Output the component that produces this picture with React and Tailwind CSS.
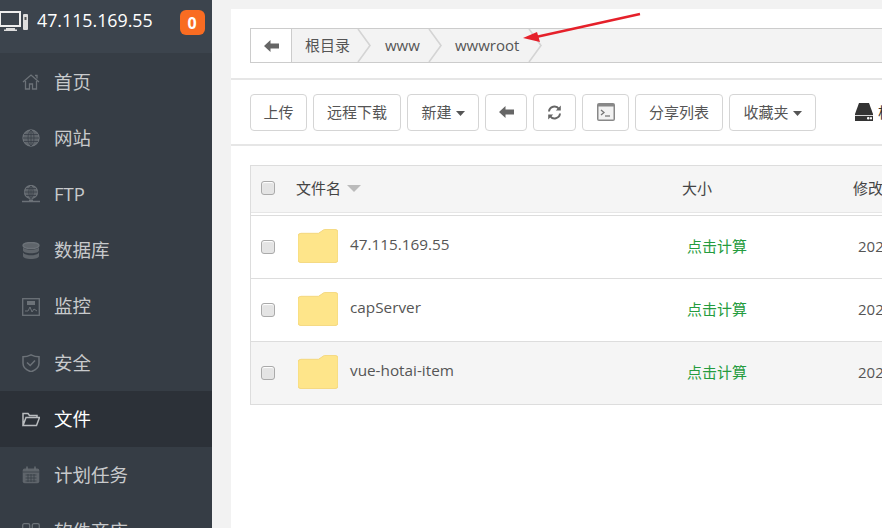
import React from "react";

const Ic = ({ children, className = "" }) => (
  <svg viewBox="0 0 18 18" className={"w-[18px] h-[18px] shrink-0 " + className} fill="none" stroke="#6c7278" strokeWidth="1.3">
    {children}
  </svg>
);

const items = [
  ["首页", <Ic><path d="M1 9l8-7 8 7M3.500 8v8h4v-5h3v5h4V8" /><path d="M13 2.500h2v3" /></Ic>],
  ["网站", <Ic><circle cx="9" cy="9" r="8" fill="#5f656b" stroke="#6c7278" /><path d="M1 9h16M2 5.500h14M2 12.500h14M9 1v16M9 1C5 4 5 14 9 17M9 1c4 3 4 13 0 16" stroke="#383f47" strokeWidth="0.8" /></Ic>],
  ["FTP", <Ic><circle cx="9" cy="7" r="6.500" fill="#5f656b" stroke="#6c7278" /><path d="M2.500 7h13M4 3.500h10M4 10.500h10M9 1v13M9 1C6 3 6 11 9 13.500M9 1c3 2 3 10 0 12.500" stroke="#383f47" strokeWidth="0.8" /><path d="M0 16.500h18" strokeWidth="1.500" /><rect x="7" y="14.500" width="4" height="2.500" fill="#6c7278" stroke="none" /></Ic>],
  ["数据库", <Ic><ellipse cx="9" cy="3.500" rx="8" ry="3" fill="#5f656b" /><path d="M1 5v3.500c0 1.500 3.500 2.800 8 2.800s8-1.300 8-2.800V5c-1 1.800-4 2.800-8 2.800S2 6.800 1 5zM1 10.500V14c0 1.800 3.500 3 8 3s8-1.200 8-3v-3.500c-1 1.800-4 2.800-8 2.800s-7-1-8-2.800z" fill="#5f656b" stroke="none" /></Ic>],
  ["监控", <Ic><rect x="0.700" y="0.700" width="16.600" height="16.600" /><rect x="5" y="3" width="8" height="4" fill="#6c7278" stroke="none" /><path d="M3 13h3l2-4 2 5 2-3 3 2" strokeWidth="1" /></Ic>],
  ["安全", <Ic><path d="M9 .800c3 1.500 5 2 8 2v6.500c0 4-3.500 7-8 8.500-4.500-1.500-8-4.500-8-8.500V2.800c3 0 5-.500 8-2z" strokeWidth="1.500" /><path d="M5 8.500l3.200 3L13 6.500" strokeWidth="1.500" /></Ic>],
  ["文件", <Ic><path d="M1 15.500V3.500h5l1.500 2H15v2M1 15.500l3-8h13.500l-3 8z" stroke="#b9bcbf" strokeWidth="1.500" /></Ic>, true],
  ["计划任务", <Ic><rect x=".700" y="2.500" width="16.600" height="14.800" rx="2" fill="#5f656b" stroke="none" /><path d="M5 .500v3M13 .500v3" /><path d="M.700 6h16.600M3.500 9h11M3.500 12h11M3.500 15h11M6 8v8M9 8v8M12 8v8" stroke="#383f47" strokeWidth=".8" /></Ic>],
  ["软件商店", <Ic><rect x=".700" y=".700" width="7" height="7" rx="1.500" /><rect x="10.300" y=".700" width="7" height="7" rx="1.500" /><rect x=".700" y="10.300" width="7" height="7" rx="1.500" /><rect x="10.300" y="10.300" width="7" height="7" rx="1.500" /></Ic>],
];

const Btn = ({ children, className = "" }) => (
  <div className={"h-[37px] border border-[#d5d5d5] rounded-[4px] bg-white flex items-center justify-center text-[15px] text-[#555] shrink-0 " + className}>
    {children}
  </div>
);

const Caret = () => (
  <svg width="9" height="5" viewBox="0 0 9 5" className="ml-[4px] mt-[2px]"><path d="M0 0h9L4.500 5z" fill="#555" /></svg>
);

const BackArrow = () => (
  <svg width="15" height="12" viewBox="0 0 15 12"><path d="M0 6l6.500-6v3.500H15v5H6.500V12z" fill="#666" /></svg>
);

const Crumb = ({ children, className = "" }) => (
  <div className={"relative h-full shrink-0 flex items-center text-[15px] text-[#555] " + className}>
    {children}
    <svg width="15" height="33" viewBox="0 0 15 33" className="absolute right-[-14px] top-0 z-10">
      <path d="M1 0l12 16.500L1 33z" fill="#f3f3f3" />
      <path d="M1 0l12 16.500L1 33" fill="none" stroke="#d4d4d4" strokeWidth="1.600" />
    </svg>
  </div>
);

const Check = () => (
  <div className="w-[14px] h-[14px] rounded-[3px] border border-[#aaa] bg-[#e4e4e4] shadow-[inset_0_1px_1px_#fff] shrink-0" />
);

const Row = ({ name, gray }) => (
  <div className={"h-[63px] flex items-center border-t border-[#ddd] whitespace-nowrap " + (gray ? "bg-[#f5f5f5]" : "bg-white")}>
    <div className="w-[47px] shrink-0 pl-[10px] flex items-center mt-[-1px]"><Check /></div>
    <svg width="40" height="34" viewBox="0 0 41 34" className="shrink-0 mt-[-3px]">
      <path d="M3 4h18l6-4h11a3 3 0 0 1 3 3v28a3 3 0 0 1-3 3H3a3 3 0 0 1-3-3V7a3 3 0 0 1 3-3z" fill="#fee58a" stroke="#f4d77c" strokeWidth="1" />
    </svg>
    <div className="ml-[12px] w-[337px] shrink-0 text-[15.3px] text-[#555] mt-[-5px]">{name}</div>
    <div className="w-[171px] shrink-0 text-[15px] text-[#259c3e] mt-[-2px]">点击计算</div>
    <div className="shrink-0 text-[15px] text-[#555] mt-[-2px]">2021/03/24 18:09:33</div>
  </div>
);

export default function App() {
  return (
    <div className="relative w-[882px] h-[528px] overflow-hidden flex bg-[#f2f2f2] font-['Open_Sans','Noto_Sans_CJK_SC',sans-serif]">
      <aside className="w-[212px] h-full shrink-0 bg-[#363d45] flex flex-col overflow-hidden">
        <div className="h-[53px] shrink-0 bg-[#3c444d] flex items-start pt-[10px]">
          <svg width="29" height="22" viewBox="0 0 29 22" className="shrink-0 mt-[1px]">
            <path d="M0 1h20v14H0z" fill="none" stroke="#eee" strokeWidth="2" />
            <path d="M6 17h9v1.500h2V20H4v-1.500h2z" fill="#ddd" />
            <rect x="23" y="3" width="5" height="16" rx="1" fill="#ddd" />
            <rect x="24.500" y="6" width="2" height="3" fill="#555" />
          </svg>
          <span className="ml-[8px] text-[17.8px] leading-[20px] text-white">47.115.169.55</span>
          <span className="ml-[27px] w-[25px] h-[25px] rounded-[6px] bg-[#f96c22] text-white text-[16px] font-bold flex items-center justify-center">0</span>
        </div>
        <div className="h-[1px] shrink-0" />
        {items.map(([label, icon, active]) => (
          <div key={label} className={"h-[56.2px] shrink-0 flex items-center pl-[22px] gap-[14px] text-[18.5px] " + (active ? "bg-[#2c3138] text-white" : "text-[#c8cacc]")}>
            {icon}
            <span className="mt-[-1px]">{label}</span>
          </div>
        ))}
      </aside>
      <main className="ml-[19px] mt-[9px] flex-1 min-w-0 bg-white overflow-hidden">
        <div className="h-[71px] border-b-2 border-[#e6e6e6] pl-[19px] pt-[19px]">
          <div className="h-[35px] w-[700px] border border-[#ccc] bg-[#f3f3f3] flex items-center">
            <div className="w-[41px] h-full bg-white border-r border-[#ccc] flex items-center justify-center shrink-0"><BackArrow /></div>
            <Crumb className="w-[66px] pl-[13px]">根目录</Crumb>
            <Crumb className="w-[71px] pl-[27px]">www</Crumb>
            <Crumb className="w-[100px] pl-[26px]">wwwroot</Crumb>
          </div>
        </div>
        <div className="h-[66px] border-b-2 border-[#e6e6e6] pl-[19px] flex items-center gap-[6px] whitespace-nowrap">
          <Btn className="w-[57px]">上传</Btn>
          <Btn className="w-[88px]">远程下载</Btn>
          <Btn className="w-[72px]">新建<Caret /></Btn>
          <Btn className="w-[42px]"><BackArrow /></Btn>
          <Btn className="w-[43px]">
            <svg width="15" height="15" viewBox="0 0 15 15" fill="none" stroke="#666" strokeWidth="2"><path d="M2 6.500A5.500 5.500 0 0 1 12 4M13 8.500A5.500 5.500 0 0 1 3 11" /><path d="M13.800 .500v5h-5zM1.200 14.500v-5h5z" fill="#666" stroke="none" /></svg>
          </Btn>
          <Btn className="w-[47px]">
            <svg width="18" height="18" viewBox="0 0 18 18"><rect width="18" height="18" rx="2" fill="#888" /><rect x="1.500" y="3.500" width="15" height="13" fill="#f2f2f2" /><path d="M4 7l3 2.500L4 12" fill="none" stroke="#777" strokeWidth="1.300" /><path d="M8 13h5" stroke="#777" strokeWidth="1.300" /></svg>
          </Btn>
          <Btn className="w-[88px]">分享列表</Btn>
          <Btn className="w-[87px]">收藏夹<Caret /></Btn>
          <div className="ml-[33px] flex items-center gap-[5px] text-[15px] text-[#333] shrink-0">
            <svg width="18" height="18" viewBox="0 0 18 18"><path d="M4 0h10l4 11v7H0v-7z" fill="#333" /><rect x="0" y="12" width="18" height=".8" fill="#fff" /><rect x="12" y="14" width="2.500" height="2.500" rx="1" fill="#fff" /><rect x="15" y="14" width="2" height="2.500" rx="1" fill="#fff" /></svg>
            根目录
          </div>
        </div>
        <div className="ml-[19px] mt-[19px] border border-[#ddd] border-r-0 w-[700px]">
          <div className="h-[47px] bg-[#f5f5f5] flex items-center text-[15px] text-[#444] border-b border-[#e6e6e6] whitespace-nowrap">
            <div className="w-[45px] shrink-0 pl-[10px] flex items-center mt-[-3px]"><Check /></div>
            <div className="w-[386px] shrink-0 flex items-center gap-[6px] mt-[-2px]">
              文件名
              <svg width="14" height="7" viewBox="0 0 14 7"><path d="M0 0h14L7 7z" fill="#bbb" /></svg>
            </div>
            <div className="w-[171px] shrink-0 mt-[-2px]">大小</div>
            <div className="shrink-0 mt-[-2px]">修改时间</div>
          </div>
          <div className="h-[2px]" />
          <Row name="47.115.169.55" />
          <Row name="capServer" />
          <Row name="vue-hotai-item" gray />
        </div>
      </main>
      <svg width="120" height="36" viewBox="0 0 120 36" className="absolute left-[522px] top-[12px] z-20 pointer-events-none">
        <path d="M118 2L14 25" stroke="#e5202a" strokeWidth="2.500" />
        <path d="M1 26L15 20l3 10z" fill="#e5202a" />
      </svg>
    </div>
  );
}
